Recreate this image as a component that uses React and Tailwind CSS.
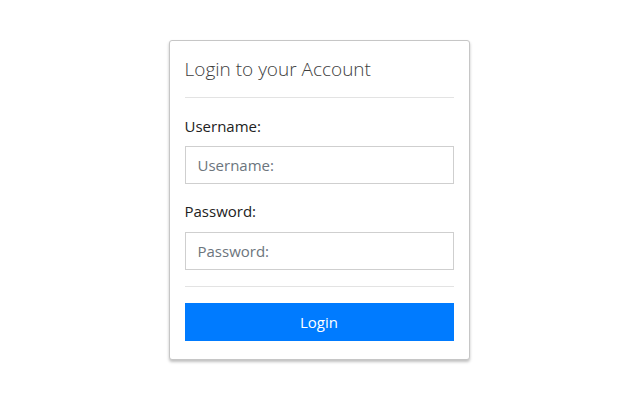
import React, { useState } from "react";

const App = () => {
  const [username, setUsername] = useState("");
  const [password, setPassword] = useState("");

  const submit = (e) => {
    e.preventDefault();
  };

  return (
    <div
      className="flex justify-center w-full min-h-[400px] bg-white pt-[40px]"
      style={{ fontFamily: '"Open Sans", "Noto Sans", sans-serif' }}
    >
      <div className="flex flex-col w-[301px] h-[320px] mr-[2px] px-[15px] pt-[16px] bg-white border border-[#c6c6c6] rounded-[3px] shadow-[0_2px_3px_rgba(0,0,0,0.25)]">
        {/* Header */}
        <h1 className="text-[19px] leading-[24px] font-light text-[#3d3d3d] pb-[16px] border-b border-[#e3e3e3]">
          Login to your Account
        </h1>
        {/* Form */}
        <form className="flex flex-col" onSubmit={submit}>
          <label
            htmlFor="username"
            className="block mt-[16px] mb-[8px] text-[15px] leading-[24px] text-[#222]"
          >
            Username:
          </label>
          <input
            type="text"
            id="username"
            className="block w-full h-[38px] px-[12px] border border-[#cfcfcf] text-[15px] text-[#495057] placeholder:text-[#6c757d] focus:outline-none"
            placeholder="Username:"
            autoComplete="off"
            value={username}
            onChange={(e) => setUsername(e.target.value)}
          />
          <label
            htmlFor="password"
            className="block mt-[15px] mb-[9px] text-[15px] leading-[24px] text-[#222]"
          >
            Password:
          </label>
          <input
            type="password"
            id="password"
            className="block w-full h-[38px] px-[12px] border border-[#cfcfcf] text-[15px] text-[#495057] placeholder:text-[#6c757d] focus:outline-none"
            placeholder="Password:"
            value={password}
            onChange={(e) => setPassword(e.target.value)}
          />
          <div className="mt-[16px] border-t border-[#e3e3e3]" />
          <button
            type="submit"
            className="w-full h-[38px] mt-[16px] bg-[#007bff] text-white text-[15px] hover:bg-[#0069d9]"
          >
            Login
          </button>
        </form>
      </div>
    </div>
  );
};

export default App;
